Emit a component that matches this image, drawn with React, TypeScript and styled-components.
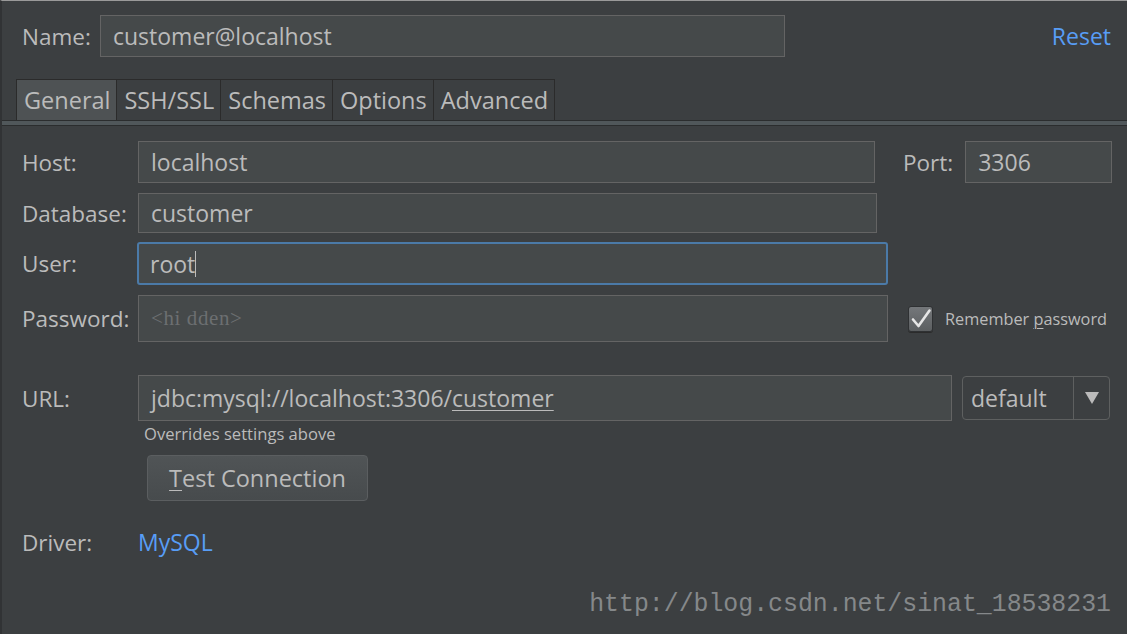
import styled, { createGlobalStyle } from "styled-components";

const GlobalStyle = createGlobalStyle`
  html, body {
    margin: 0;
    padding: 0;
    background: #3c3f41;
  }
  body {
    font-family: "Open Sans", "Noto Sans", sans-serif;
    color: #bbbbbb;
  }
`;

const Window = styled.div`
  width: 1127px;
  height: 634px;
  box-sizing: border-box;
  background: #3c3f41;
  border-top: 1px solid #9a9a9a;
  border-left: 2px solid #313335;
  position: relative;
  overflow: hidden;
`;

const HeaderRow = styled.div`
  display: flex;
  align-items: center;
  height: 42px;
  margin-top: 14px;
  padding: 0 16px 0 20px;
`;

const Label = styled.span<{ $width?: number }>`
  font-size: 22.5px;
  color: #bbbbbb;
  width: ${(p) => (p.$width ? `${p.$width}px` : "auto")};
  flex-shrink: 0;
  white-space: nowrap;
`;

const Field = styled.div<{ $width: number; $height?: number; $focused?: boolean }>`
  box-sizing: border-box;
  width: ${(p) => p.$width}px;
  height: ${(p) => p.$height ?? 42}px;
  background: #45494a;
  border: ${(p) => (p.$focused ? "2px solid #4b7aa8" : "1px solid #646464")};
  border-radius: ${(p) => (p.$focused ? "3px" : "0")};
  display: flex;
  align-items: center;
  padding-left: ${(p) => (p.$focused ? 11 : 12)}px;
  font-size: 23px;
  color: #bbbbbb;
  white-space: nowrap;
  flex-shrink: 0;
`;

const Caret = styled.span`
  display: inline-block;
  width: 1px;
  height: 26px;
  background: #bbbbbb;
  vertical-align: middle;
`;

const Placeholder = styled.span`
  font-family: "Liberation Serif", "DejaVu Serif", serif;
  font-size: 21px;
  color: #6c6f71;
  letter-spacing: 0.6px;
`;

const Link = styled.a`
  font-size: 23px;
  color: #589df6;
  text-decoration: none;
  cursor: pointer;
`;

const Spacer = styled.div`
  flex: 1;
`;

const TabBar = styled.div`
  display: flex;
  margin-top: 22px;
  padding-left: 15px;
  height: 41px;
`;

const Tab = styled.div<{ $active?: boolean }>`
  box-sizing: border-box;
  height: 41px;
  padding: 0 6px 0 7px;
  display: flex;
  align-items: center;
  font-size: 23.5px;
  color: #bbbbbb;
  background: ${(p) => (p.$active ? "#4e5254" : "#3c3f41")};
  border: 1px solid #2b2b2b;
  border-bottom: none;
  margin-left: -1px;
`;

const TabRule = styled.div`
  height: 6px;
  box-sizing: border-box;
  border-top: 1px solid #2b2d2e;
  border-bottom: 1px solid #2b2d2e;
  background: #50575a;
`;

const Form = styled.div`
  display: flex;
  flex-direction: column;
  padding: 15px 0 0 20px;
`;

const Row = styled.div<{ $gap?: number; $height?: number }>`
  display: flex;
  align-items: center;
  margin-top: ${(p) => p.$gap ?? 0}px;
  height: ${(p) => p.$height ?? 42}px;
`;

const PortGroup = styled.div`
  display: flex;
  align-items: center;
  margin-left: 28px;
  gap: 12px;
`;

const CheckGroup = styled.label`
  display: flex;
  align-items: center;
  margin-left: 20px;
  gap: 12px;
  font-size: 16.3px;
  color: #bbbbbb;
  white-space: nowrap;
`;

const CheckBox = styled.span`
  box-sizing: border-box;
  width: 25px;
  height: 26px;
  border: 1px solid #2f3133;
  border-radius: 3px;
  background: linear-gradient(#74777a, #5c5f61);
  display: flex;
  align-items: center;
  justify-content: center;
  box-shadow: 0 1px 0 #2b2b2b;
`;

const Underlined = styled.span`
  text-decoration: underline;
  text-underline-offset: 3px;
  text-decoration-thickness: 1px;
`;

const Combo = styled.div`
  box-sizing: border-box;
  margin-left: 10px;
  width: 148px;
  height: 44px;
  border: 1px solid #5e6060;
  border-radius: 4px;
  display: flex;
  align-items: stretch;
  font-size: 23px;
  color: #bbbbbb;
`;

const ComboValue = styled.div`
  flex: 1;
  display: flex;
  align-items: center;
  padding-left: 8px;
  border-right: 1px solid #5e6060;
`;

const ComboArrow = styled.div`
  width: 35px;
  display: flex;
  align-items: center;
  justify-content: center;
`;

const Hint = styled.div`
  margin: 2px 0 0 122px;
  font-size: 16.6px;
  line-height: 22px;
  color: #bbbbbb;
`;

const Button = styled.button`
  box-sizing: border-box;
  margin: 10px 0 0 125px;
  width: 221px;
  height: 46px;
  border: 1px solid #5b5e60;
  border-radius: 4px;
  background: linear-gradient(#505456, #474b4d);
  font-family: "Open Sans", "Noto Sans", sans-serif;
  font-size: 23.5px;
  color: #bbbbbb;
  align-self: flex-start;
  padding: 0;
  cursor: pointer;
`;

const Watermark = styled.div`
  position: absolute;
  right: 16px;
  bottom: 16px;
  font-family: "Liberation Mono", "DejaVu Sans Mono", monospace;
  font-size: 24.85px;
  color: #85888a;
`;

export default function App() {
  return (
    <>
      <GlobalStyle />
      <Window>
        <HeaderRow>
          <Label $width={78}>Name:</Label>
          <Field $width={685}>customer@localhost</Field>
          <Spacer />
          <Link>Reset</Link>
        </HeaderRow>

        <TabBar>
          <Tab $active>General</Tab>
          <Tab>SSH/SSL</Tab>
          <Tab>Schemas</Tab>
          <Tab>Options</Tab>
          <Tab>Advanced</Tab>
        </TabBar>
        <TabRule />

        <Form>
          <Row>
            <Label $width={116}>Host:</Label>
            <Field $width={737}>localhost</Field>
            <PortGroup>
              <Label>Port:</Label>
              <Field $width={147}>3306</Field>
            </PortGroup>
          </Row>
          <Row $gap={10} $height={40}>
            <Label $width={116}>Database:</Label>
            <Field $width={739} $height={40}>customer</Field>
          </Row>
          <Row $gap={9} $height={43}>
            <Label $width={115}>User:</Label>
            <Field $width={751} $height={43} $focused>
              root
              <Caret />
            </Field>
          </Row>
          <Row $gap={10} $height={47}>
            <Label $width={116}>Password:</Label>
            <Field $width={750} $height={47}>
              <Placeholder>&lt;hi dden&gt;</Placeholder>
            </Field>
            <CheckGroup>
              <CheckBox>
                <svg width="22" height="22" viewBox="0 0 22 22">
                  <path
                    d="M3 11.5 L8.5 18 L19.5 2.5"
                    fill="none"
                    stroke="#e6e6e6"
                    strokeWidth="2.6"
                    strokeLinecap="round"
                    strokeLinejoin="round"
                  />
                </svg>
              </CheckBox>
              <span>
                Remember <Underlined>p</Underlined>assword
              </span>
            </CheckGroup>
          </Row>
          <Row $gap={33} $height={46}>
            <Label $width={116}>URL:</Label>
            <Field $width={814} $height={46}>
              jdbc:mysql://localhost:3306/<Underlined>customer</Underlined>
            </Field>
            <Combo>
              <ComboValue>default</ComboValue>
              <ComboArrow>
                <svg width="14" height="12" viewBox="0 0 14 12">
                  <path d="M0 0 H14 L7 12 Z" fill="#bbbbbb" />
                </svg>
              </ComboArrow>
            </Combo>
          </Row>
          <Hint>Overrides settings above</Hint>
          <Button>
            <Underlined>T</Underlined>est Connection
          </Button>
          <Row $gap={26} $height={30}>
            <Label $width={116}>Driver:</Label>
            <Link>MySQL</Link>
          </Row>
        </Form>

        <Watermark>http://blog.csdn.net/sinat_18538231</Watermark>
      </Window>
    </>
  );
}
